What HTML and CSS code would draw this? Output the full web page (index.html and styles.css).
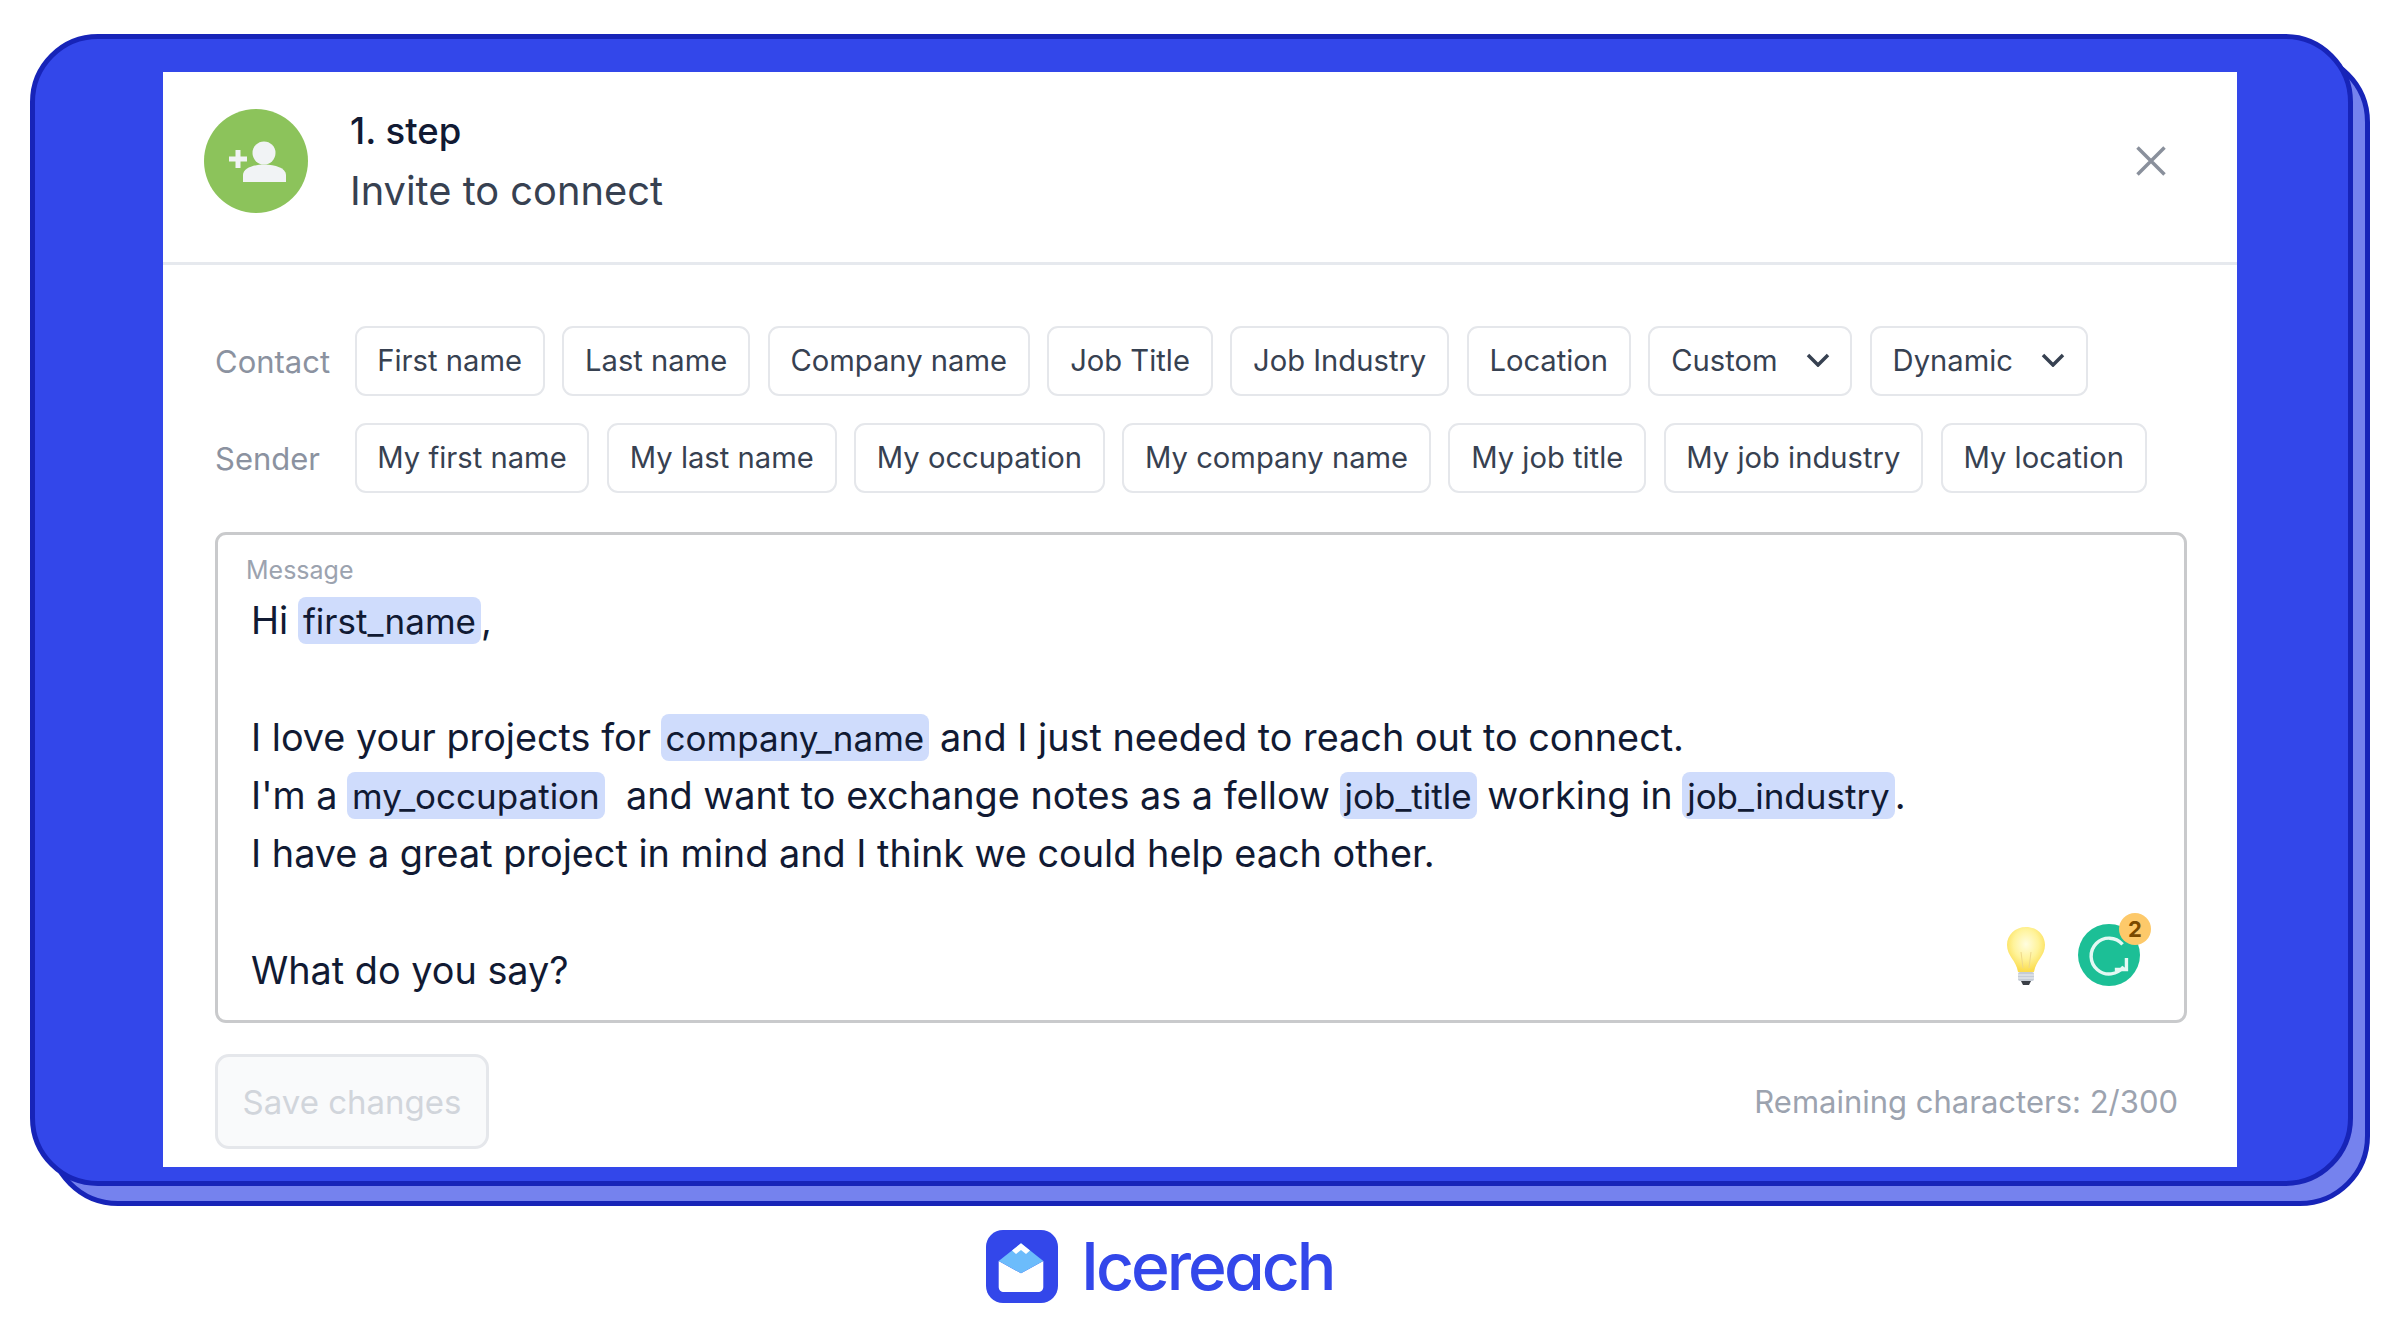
FILE: index.html
```html
<!DOCTYPE html>
<html lang="en">
<head>
    <meta charset="UTF-8">
    <title>Icereach - Invite to connect</title>
    <link rel="stylesheet" href="styles.css">
</head>
<body>
    <div class="stage">
        <div class="card">
            <div class="panel">
                <header class="step">
                    <div class="avatar">
                        <svg viewBox="0 0 104 104" width="104" height="104">
                            <circle cx="60" cy="44" r="11.5" fill="#f1f3f5"/>
                            <path d="M39 73V66C39 59 50 55.500 60.500 55.500S82 59 82 66V73Z" fill="#f1f3f5"/>
                            <path d="M34 41V59M25 50H43" stroke="#f1f3f5" stroke-width="5" fill="none"/>
                        </svg>
                    </div>
                    <div class="step-text">
                        <div class="step-number">1. step</div>
                        <div class="step-name">Invite to connect</div>
                    </div>
                    <svg class="close" viewBox="0 0 30 30" width="30" height="30">
                        <path d="M1.500 1.500L28.500 28.500M28.500 1.500L1.500 28.500" stroke="#8a909c" stroke-width="3.500" fill="none"/>
                    </svg>
                </header>

                <div class="content">
                    <div class="chip-row">
                        <span class="chip-label">Contact</span>
                        <button class="chip">First name</button>
                        <button class="chip">Last name</button>
                        <button class="chip">Company name</button>
                        <button class="chip">Job Title</button>
                        <button class="chip">Job Industry</button>
                        <button class="chip">Location</button>
                        <button class="chip">Custom
                            <svg class="chevron" viewBox="0 0 24 14" width="24" height="14"><path d="M2 2L12 12L22 2" stroke="#374151" stroke-width="3.500" fill="none"/></svg>
                        </button>
                        <button class="chip">Dynamic
                            <svg class="chevron" viewBox="0 0 24 14" width="24" height="14"><path d="M2 2L12 12L22 2" stroke="#374151" stroke-width="3.500" fill="none"/></svg>
                        </button>
                    </div>
                    <div class="chip-row second">
                        <span class="chip-label">Sender</span>
                        <button class="chip">My first name</button>
                        <button class="chip">My last name</button>
                        <button class="chip">My occupation</button>
                        <button class="chip">My company name</button>
                        <button class="chip">My job title</button>
                        <button class="chip">My job industry</button>
                        <button class="chip">My location</button>
                    </div>

                    <div class="message">
                        <div class="message-label">Message</div>
                        <div class="message-text">
                            <div class="line">Hi <span class="tag">first_name</span>,</div>
                            <div class="line">&nbsp;</div>
                            <div class="line">I love your projects for <span class="tag">company_name</span> and I just needed to reach out to connect.</div>
                            <div class="line">I'm a <span class="tag">my_occupation</span> &nbsp;and want to exchange notes as a fellow <span class="tag">job_title</span> working in <span class="tag">job_industry</span>.</div>
                            <div class="line">I have a great project in mind and I think we could help each other.</div>
                            <div class="line">&nbsp;</div>
                            <div class="line">What do you say?</div>
                        </div>
                        <div class="tools">
                            <svg viewBox="0 0 40 60" width="40" height="60">
                                <defs>
                                    <radialGradient id="bulbGlow" cx="50%" cy="38%" r="60%">
                                        <stop offset="0" stop-color="#fffde0"/>
                                        <stop offset="0.55" stop-color="#fff39a"/>
                                        <stop offset="1" stop-color="#fbdc4e"/>
                                    </radialGradient>
                                </defs>
                                <path d="M20 1C9 1 1 9 1 19C1 30 10 34 12 46H28C30 34 39 30 39 19C39 9 31 1 20 1Z" fill="url(#bulbGlow)"/>
                                <path d="M17 42L15 26M23 42L25 26" stroke="#efd98a" stroke-width="1" fill="none"/>
                                <rect x="12" y="46" width="16" height="9" rx="2" fill="#c5ccd6"/>
                                <path d="M12 49H28M12 52H28" stroke="#eef1f4" stroke-width="1"/>
                                <path d="M15 55H25L23 59H17Z" fill="#3a3f46"/>
                            </svg>
                            <div class="grammar">
                                <svg viewBox="0 0 64 64" width="62" height="62">
                                    <circle cx="32" cy="32" r="32" fill="#1cbf96"/>
                                    <path d="M46 21A18.500 18.500 0 1 0 47 44" stroke="#e4f8f3" stroke-width="3.500" fill="none"/>
                                    <path d="M50 35V47H38" stroke="#e4f8f3" stroke-width="3.500" fill="none"/>
                                </svg>
                                <span class="grammar-badge">2</span>
                            </div>
                        </div>
                    </div>

                    <div class="footer">
                        <button class="save">Save changes</button>
                        <span class="remaining">Remaining characters: 2/300</span>
                    </div>
                </div>
            </div>
        </div>
    </div>

    <div class="brand">
        <svg viewBox="0 0 72 73" width="72" height="73">
            <rect width="72" height="73" rx="17" fill="#3347ea"/>
            <path d="M12.700 31L35 43.300L57.300 31V57C57.300 60 55 62 52 62H18C15 62 12.700 60 12.700 57Z" fill="#fff"/>
            <path d="M12.700 31L35 13.300L57.300 31L35 43.300Z" fill="#6cbcfb"/>
            <path d="M35 13.300L26 20.500L30 24L35 20L40 24L44 20.500Z" fill="#fff"/>
        </svg>
        <span class="brand-name">Icereach</span>
    </div>
</body>
</html>
```

FILE: styles.css
```css
body {
    font-family: Inter, "Liberation Sans", sans-serif;
    margin: 0;
    background: white;
    color: #111a33;
}
button {
    font-family: inherit;
}

/* Blue frame */
.stage {
    position: relative;
    width: 2323px;
    margin: 34px 0 0 30px;
}
.stage::before {
    content: "";
    position: absolute;
    top: 18px;
    left: 18px;
    right: -17px;
    bottom: -20px;
    box-sizing: border-box;
    background: #7582ee;
    border: 5px solid #1724b8;
    border-radius: 70px;
}
.card {
    position: relative;
    box-sizing: border-box;
    height: 1152px;
    padding: 33px 111px 14px 128px;
    background: #3347ea;
    border: 5px solid #1724b8;
    border-radius: 68px;
}
.panel {
    height: 100%;
    background: white;
}

/* Step header */
.step {
    display: flex;
    align-items: center;
    box-sizing: border-box;
    height: 193px;
    padding: 0 71px 12px 41px;
    border-bottom: 3px solid #e6e9ee;
}
.avatar {
    width: 104px;
    height: 104px;
    border-radius: 50%;
    background: #8cc35b;
}
.avatar svg {
    display: block;
}
.step-text {
    margin-left: 42px;
    padding-top: 2px;
    flex: 1;
}
.step-number {
    font-size: 36.500px;
    font-weight: 500;
    line-height: 56px;
    color: #111a33;
}
.step-name {
    margin-top: 2px;
    font-size: 39.800px;
    line-height: 60px;
    color: #374151;
}

/* Placeholder chips */
.content {
    padding: 61px 50px 0 52px;
}
.chip-row {
    display: flex;
    align-items: center;
    gap: 17.500px;
    height: 70px;
}
.chip-row.second {
    margin-top: 27px;
}
.chip-label {
    width: 122px;
    font-size: 31px;
    color: #8b92a0;
}
.chip {
    display: flex;
    align-items: center;
    box-sizing: border-box;
    height: 100%;
    padding: 0 20.800px 2px;
    background: white;
    border: 2.500px solid #e5e7eb;
    border-radius: 11px;
    font-size: 29.200px;
    color: #374151;
}
.chevron {
    margin-left: 28px;
}

/* Message box */
.message {
    position: relative;
    box-sizing: border-box;
    height: 491px;
    margin-top: 39px;
    padding: 16px 30px 0 33px;
    border: 3px solid #c9cacc;
    border-radius: 11px;
}
.message-label {
    height: 40px;
    line-height: 38px;
    margin-left: -5px;
    font-size: 25px;
    color: #9ca3af;
}
.message-text {
    font-size: 37.800px;
    line-height: 58.300px;
    color: #111a33;
}
.line {
    white-space: nowrap;
    height: 58.300px;
}
.tag {
    display: inline-block;
    padding: 0 5px;
    margin-left: -1px;
    box-sizing: border-box;
    height: 47px;
    line-height: 49px;
    font-size: 35px;
    background: #cfdcfc;
    border-radius: 8px;
}
.tools {
    position: absolute;
    right: 33px;
    bottom: 34px;
    display: flex;
    align-items: flex-end;
    gap: 32px;
}
.tools svg {
    display: block;
}
.grammar {
    position: relative;
    width: 73px;
    height: 73px;
    display: flex;
    align-items: flex-end;
}
.grammar-badge {
    position: absolute;
    top: 0;
    right: 0;
    width: 32px;
    height: 32px;
    border-radius: 50%;
    background: #fdc96a;
    color: #7a4a00;
    font-size: 22px;
    font-weight: 700;
    line-height: 32px;
    text-align: center;
}

/* Footer */
.footer {
    display: flex;
    align-items: center;
    justify-content: space-between;
    margin-top: 31px;
}
.save {
    box-sizing: border-box;
    width: 274px;
    height: 95px;
    background: #f9fafb;
    border: 3px solid #e5e7eb;
    border-radius: 14px;
    font-size: 33px;
    color: #d1d5db;
}
.remaining {
    margin-right: 9px;
    font-size: 31px;
    color: #9ca3af;
}

/* Logo */
.brand {
    display: flex;
    align-items: center;
    gap: 23px;
    margin-top: 40px;
    padding-left: 986px;
}
.brand-name {
    font-size: 66px;
    font-weight: 500;
    letter-spacing: -3px;
    color: #3347ea;
    font-feature-settings: "cv11";
}
```
